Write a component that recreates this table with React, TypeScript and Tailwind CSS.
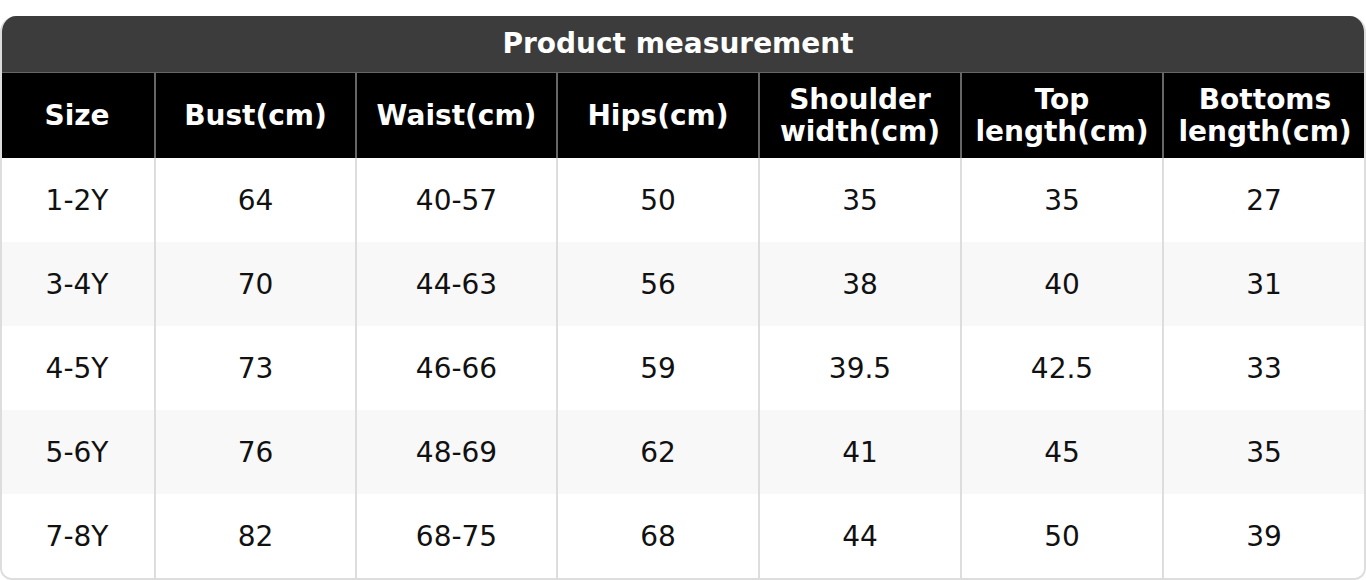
const headers = [
  ["Size"],
  ["Bust(cm)"],
  ["Waist(cm)"],
  ["Hips(cm)"],
  ["Shoulder", "width(cm)"],
  ["Top", "length(cm)"],
  ["Bottoms", "length(cm)"],
];

const rows = [
  ["1-2Y", "64", "40-57", "50", "35", "35", "27"],
  ["3-4Y", "70", "44-63", "56", "38", "40", "31"],
  ["4-5Y", "73", "46-66", "59", "39.5", "42.5", "33"],
  ["5-6Y", "76", "48-69", "62", "41", "45", "35"],
  ["7-8Y", "82", "68-75", "68", "44", "50", "39"],
];

const cols = "grid grid-cols-[154px_201px_201px_202px_202px_202px_1fr]";

export default function App() {
  return (
    <div
      className="bg-white pt-4 text-[28px] leading-[32px]"
      style={{ fontFamily: '"DejaVu Sans", sans-serif' }}
    >
      <div className="rounded-t-[16px] rounded-b-[12px] overflow-hidden border-x-2 border-b-2 border-[#dddddd]">
        <div className="h-[57px] -mx-[2px] pr-[10px] bg-[#3c3c3c] border-b border-[#666666] flex items-center justify-center font-bold text-white">
          Product measurement
        </div>
        <div className={`${cols} -mx-[2px] bg-black h-[85px]`}>
          {headers.map((h, i) => (
            <div
              key={i}
              className={`flex flex-col items-center justify-center pt-[1px] font-bold text-white ${
                i > 0 ? "border-l-2 border-[#666666]" : ""
              }`}
            >
              {h.map((line) => (
                <span key={line}>{line}</span>
              ))}
            </div>
          ))}
        </div>
        {rows.map((r, ri) => (
          <div
            key={ri}
            className={`${cols} -ml-[2px] h-[84px] ${ri % 2 === 1 ? "bg-[#f8f8f8]" : "bg-white"}`}
          >
            {r.map((v, ci) => (
              <div
                key={ci}
                className={`flex items-center justify-center pt-[2px] text-[#111111] ${
                  ci > 0 ? "border-l-2 border-[#dddddd]" : ""
                }`}
              >
                {v}
              </div>
            ))}
          </div>
        ))}
      </div>
    </div>
  );
}
